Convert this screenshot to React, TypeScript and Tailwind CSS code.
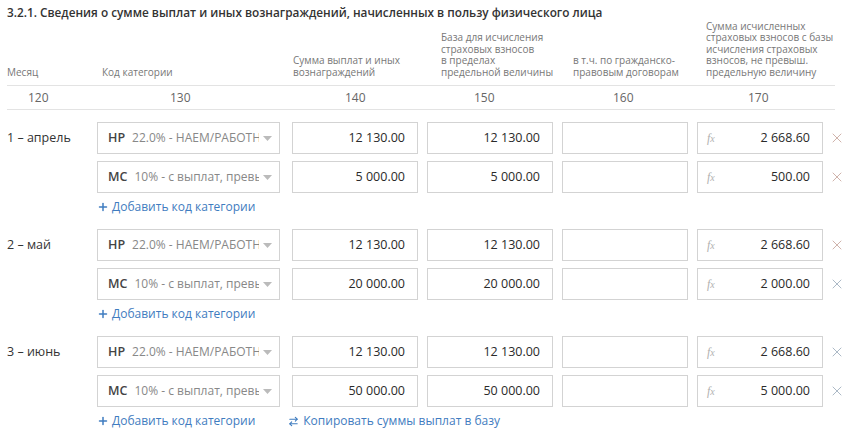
import { ArrowRightLeft, Plus, X } from "lucide-react";

type Line = {
  code: string;
  desc: string;
  s140: string;
  s150: string;
  s170: string;
  xColor: string;
};

type Month = {
  label: string;
  lines: Line[];
  copy?: boolean;
};

const months: Month[] = [
  {
    label: "1 – апрель",
    lines: [
      { code: "НР", desc: "22.0% - НАЕМ/РАБОТНИКИ", s140: "12 130.00", s150: "12 130.00", s170: "2 668.60", xColor: "text-[#c4a096]" },
      { code: "МС", desc: "10% - с выплат, превышающих", s140: "5 000.00", s150: "5 000.00", s170: "500.00", xColor: "text-[#c4a096]" },
    ],
  },
  {
    label: "2 – май",
    lines: [
      { code: "НР", desc: "22.0% - НАЕМ/РАБОТНИКИ", s140: "12 130.00", s150: "12 130.00", s170: "2 668.60", xColor: "text-[#c4a096]" },
      { code: "МС", desc: "10% - с выплат, превышающих", s140: "20 000.00", s150: "20 000.00", s170: "2 000.00", xColor: "text-[#97a7b8]" },
    ],
  },
  {
    label: "3 – июнь",
    copy: true,
    lines: [
      { code: "НР", desc: "22.0% - НАЕМ/РАБОТНИКИ", s140: "12 130.00", s150: "12 130.00", s170: "2 668.60", xColor: "text-[#97a7b8]" },
      { code: "МС", desc: "10% - с выплат, превышающих", s140: "50 000.00", s150: "50 000.00", s170: "5 000.00", xColor: "text-[#97a7b8]" },
    ],
  },
];

const Box = ({ value, fx }: { value?: string; fx?: boolean }) => (
  <div className="flex h-[32px] w-[126px] items-center border border-[#d3d3d3] bg-white pr-[12px] pl-[9px] text-[12.5px] text-[#2a2a2a]">
    {fx && (
      <span className="font-['Liberation_Serif',serif] text-[12px] italic text-[#b0b0b0]">
        f<span className="text-[10px]">x</span>
      </span>
    )}
    <span className="ml-auto">{value}</span>
  </div>
);

const CodeSelect = ({ code, desc }: { code: string; desc: string }) => (
  <div className="flex h-[32px] w-[183px] items-center border border-[#d3d3d3] bg-white pl-[10px] pr-[7px] text-[12.5px]">
    <span className="font-semibold text-[#444]">{code}</span>
    <span className="ml-[7px] min-w-0 flex-1 overflow-hidden whitespace-nowrap text-[12px] text-[#888]">{desc}</span>
    <svg width="9" height="5" viewBox="0 0 9 5" className="ml-[4px] shrink-0">
      <path d="M0 0h9L4.5 5z" fill="#bbb" />
    </svg>
  </div>
);

export default function App() {
  return (
    <div className="min-h-[441px] w-[849px] bg-white pl-[7px] font-['Open_Sans',sans-serif] text-[#333]">
      <div className="pt-[4px] text-[11.8px] font-semibold leading-[17px] text-[#333]">
        3.2.1. Сведения о сумме выплат и иных вознаграждений, начисленных в пользу физического лица
      </div>

      <div className="w-[828px] whitespace-nowrap text-[10px] leading-[11.4px] text-[#777]">
        <div className="flex h-[65px] items-end border-b border-[#e3e3e3] pb-[7px]">
          <div className="w-[90px]">Месяц</div>
          <div className="w-[195px] pl-[5px]">Код категории</div>
          <div className="w-[135px] pl-[1px]">
            Сумма выплат и иных
            <br />
            вознаграждений
          </div>
          <div className="w-[135px] pl-[14px]">
            База для исчисления
            <br />
            страховых взносов
            <br />в пределах
            <br />
            предельной величины
          </div>
          <div className="w-[135px] pl-[11px]">
            в т.ч. по гражданско-
            <br />
            правовым договорам
          </div>
          <div className="pl-[9px]">
            Сумма исчисленных
            <br />
            страховых взносов с базы
            <br />
            исчисления страховых
            <br />
            взносов, не превыш.
            <br />
            предельную величину
          </div>
        </div>
        <div className="flex h-[24px] items-center border-b border-[#e3e3e3] text-[12px] text-[#666]">
          <div className="w-[90px] pl-[21px]">120</div>
          <div className="w-[195px] pl-[73px]">130</div>
          <div className="w-[135px] pl-[53px]">140</div>
          <div className="w-[135px] pl-[47px]">150</div>
          <div className="w-[135px] pl-[51px]">160</div>
          <div className="pl-[51px]">170</div>
        </div>
      </div>

      <div className="mt-[12px] flex flex-col gap-[14px]">
        {months.map((m) => (
          <div key={m.label} className="flex">
            <div className="flex h-[32px] w-[90px] items-center text-[12.5px] text-[#333]">{m.label}</div>
            <div className="flex flex-col">
              <div className="flex flex-col gap-[7px]">
                {m.lines.map((l) => (
                  <div key={l.code} className="flex items-center">
                    <CodeSelect code={l.code} desc={l.desc} />
                    <div className="ml-[12px] flex gap-[9px]">
                      <Box value={l.s140} />
                      <Box value={l.s150} />
                      <Box />
                      <Box value={l.s170} fx />
                    </div>
                    <X className={`ml-[6px] h-[16px] w-[16px] ${l.xColor}`} strokeWidth={1.2} />
                  </div>
                ))}
              </div>
              <div className="mt-[6px] flex h-[16px] items-center text-[12px] text-[#3f7cc0]">
                <Plus className="h-[12px] w-[12px]" strokeWidth={3} />
                <span className="ml-[3px]">Добавить код категории</span>
                {m.copy && (
                  <span className="ml-[33px] flex items-center">
                    <ArrowRightLeft className="h-[11px] w-[11px]" strokeWidth={2.5} />
                    <span className="ml-[4px]">Копировать суммы выплат в базу</span>
                  </span>
                )}
              </div>
            </div>
          </div>
        ))}
      </div>
    </div>
  );
}
